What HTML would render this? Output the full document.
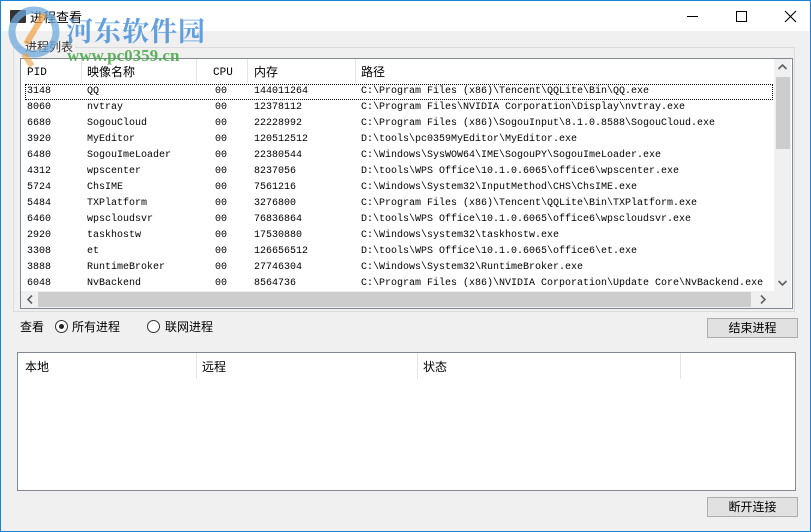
<!DOCTYPE html>
<html><head><meta charset="utf-8">
<style>
*{margin:0;padding:0;box-sizing:border-box}
body{width:811px;height:532px;position:relative;overflow:hidden;background:#f0f0f0;font-family:"Liberation Sans","Noto Sans CJK SC",sans-serif;font-size:12px;color:#000}
.abs{position:absolute}
#win{position:absolute;left:0;top:0;width:811px;height:532px;border:1px solid #1883d7;border-top:none}
#title{position:absolute;left:0;top:0;width:811px;height:31px;background:#fff;border-top:1px solid #1883d7}
.mono{font-family:"Liberation Mono","Noto Sans CJK SC",monospace;font-size:10px}
.row{position:absolute;left:0;height:16px;line-height:16px;white-space:pre}
.row span{position:absolute;top:0}
.hdr{position:absolute;top:2px;height:24px;line-height:24px;font-size:12px}
.hm{font-family:"Liberation Mono",monospace;font-size:11px}
.sep{position:absolute;top:0;width:1px;height:24px;background:#e5e5e5}
.btn{position:absolute;width:91px;height:20px;background:#e1e1e1;border:1px solid #adadad;text-align:center;line-height:18px;font-family:"Liberation Sans","Noto Sans CJK SC",sans-serif;font-size:12px}
</style></head><body>
<div id="title">
 <div class="abs" style="left:10px;top:9px;width:16px;height:13px;background:#333;border-radius:1px"></div>
 <div class="abs" style="left:30px;top:6px;font-size:13px">进程查看</div>
 <div class="abs" style="left:687px;top:15px;width:11px;height:1px;background:#000"></div>
 <div class="abs" style="left:736px;top:10px;width:11px;height:11px;border:1px solid #000"></div>
 <svg class="abs" style="left:784px;top:9px" width="13" height="13"><path d="M1 1L12 12M12 1L1 12" stroke="#000" stroke-width="1.1"/></svg>
</div>
<div id="win"></div>

<div class="abs" style="left:13px;top:47px;width:782px;height:265px;border:1px solid #dcdcdc"></div>
<div class="abs" style="left:23px;top:38px;background:#f0f0f0;padding:0 2px;font-size:12px;color:#333">进程列表</div>

<div class="abs mono" style="left:20px;top:58px;width:773px;height:251px;border:1px solid #828790;background:#fff;overflow:hidden">
 <div class="hdr hm" style="left:6px">PID</div>
 <div class="sep" style="left:60px"></div>
 <div class="hdr" style="left:66px">映像名称</div>
 <div class="sep" style="left:175px"></div>
 <div class="hdr hm" style="left:192px">CPU</div>
 <div class="sep" style="left:226px"></div>
 <div class="hdr" style="left:233px">内存</div>
 <div class="sep" style="left:334px"></div>
 <div class="hdr" style="left:340px">路径</div>
 <div class="abs" style="left:4px;top:25px;width:748px;height:16px;border:1px dotted #000"></div>
 <div class="abs" style="left:0;top:25px;width:753px">
  <div class="row" style="top:0"><span style="left:6px">3148</span><span style="left:66px">QQ</span><span style="left:194px">00</span><span style="left:233px">144011264</span><span style="left:340px">C:\Program Files (x86)\Tencent\QQLite\Bin\QQ.exe</span></div>
  <div class="row" style="top:16px"><span style="left:6px">8060</span><span style="left:66px">nvtray</span><span style="left:194px">00</span><span style="left:233px">12378112</span><span style="left:340px">C:\Program Files\NVIDIA Corporation\Display\nvtray.exe</span></div>
  <div class="row" style="top:32px"><span style="left:6px">6680</span><span style="left:66px">SogouCloud</span><span style="left:194px">00</span><span style="left:233px">22228992</span><span style="left:340px">C:\Program Files (x86)\SogouInput\8.1.0.8588\SogouCloud.exe</span></div>
  <div class="row" style="top:48px"><span style="left:6px">3920</span><span style="left:66px">MyEditor</span><span style="left:194px">00</span><span style="left:233px">120512512</span><span style="left:340px">D:\tools\pc0359MyEditor\MyEditor.exe</span></div>
  <div class="row" style="top:64px"><span style="left:6px">6480</span><span style="left:66px">SogouImeLoader</span><span style="left:194px">00</span><span style="left:233px">22380544</span><span style="left:340px">C:\Windows\SysWOW64\IME\SogouPY\SogouImeLoader.exe</span></div>
  <div class="row" style="top:80px"><span style="left:6px">4312</span><span style="left:66px">wpscenter</span><span style="left:194px">00</span><span style="left:233px">8237056</span><span style="left:340px">D:\tools\WPS Office\10.1.0.6065\office6\wpscenter.exe</span></div>
  <div class="row" style="top:96px"><span style="left:6px">5724</span><span style="left:66px">ChsIME</span><span style="left:194px">00</span><span style="left:233px">7561216</span><span style="left:340px">C:\Windows\System32\InputMethod\CHS\ChsIME.exe</span></div>
  <div class="row" style="top:112px"><span style="left:6px">5484</span><span style="left:66px">TXPlatform</span><span style="left:194px">00</span><span style="left:233px">3276800</span><span style="left:340px">C:\Program Files (x86)\Tencent\QQLite\Bin\TXPlatform.exe</span></div>
  <div class="row" style="top:128px"><span style="left:6px">6460</span><span style="left:66px">wpscloudsvr</span><span style="left:194px">00</span><span style="left:233px">76836864</span><span style="left:340px">D:\tools\WPS Office\10.1.0.6065\office6\wpscloudsvr.exe</span></div>
  <div class="row" style="top:144px"><span style="left:6px">2920</span><span style="left:66px">taskhostw</span><span style="left:194px">00</span><span style="left:233px">17530880</span><span style="left:340px">C:\Windows\system32\taskhostw.exe</span></div>
  <div class="row" style="top:160px"><span style="left:6px">3308</span><span style="left:66px">et</span><span style="left:194px">00</span><span style="left:233px">126656512</span><span style="left:340px">D:\tools\WPS Office\10.1.0.6065\office6\et.exe</span></div>
  <div class="row" style="top:176px"><span style="left:6px">3888</span><span style="left:66px">RuntimeBroker</span><span style="left:194px">00</span><span style="left:233px">27746304</span><span style="left:340px">C:\Windows\System32\RuntimeBroker.exe</span></div>
  <div class="row" style="top:192px"><span style="left:6px">6048</span><span style="left:66px">NvBackend</span><span style="left:194px">00</span><span style="left:233px">8564736</span><span style="left:340px">C:\Program Files (x86)\NVIDIA Corporation\Update Core\NvBackend.exe</span></div>
 </div>
 <div class="abs" style="left:753px;top:0;width:17px;height:232px;background:#f0f0f0"></div>
 <div class="abs" style="left:755px;top:18px;width:14px;height:72px;background:#cdcdcd"></div>
 <svg class="abs" style="left:756px;top:4px" width="11" height="8"><path d="M1.5 6L5.5 2L9.5 6" stroke="#606060" stroke-width="1.6" fill="none"/></svg>
 <svg class="abs" style="left:756px;top:220px" width="11" height="8"><path d="M1.5 2L5.5 6L9.5 2" stroke="#606060" stroke-width="1.6" fill="none"/></svg>
 <div class="abs" style="left:0;top:232px;width:753px;height:17px;background:#f0f0f0"></div>
 <div class="abs" style="left:17px;top:233px;width:713px;height:15px;background:#cdcdcd"></div>
 <div class="abs" style="left:753px;top:232px;width:17px;height:17px;background:#f0f0f0"></div>
 <svg class="abs" style="left:5px;top:235px" width="8" height="11"><path d="M6 1.5L2 5.5L6 9.5" stroke="#606060" stroke-width="1.6" fill="none"/></svg>
 <svg class="abs" style="left:738px;top:235px" width="8" height="11"><path d="M2 1.5L6 5.5L2 9.5" stroke="#606060" stroke-width="1.6" fill="none"/></svg>
</div>

<div class="abs" style="left:20px;top:318px">查看</div>
<div class="abs" style="left:55px;top:320px;width:13px;height:13px;border:1px solid #333;border-radius:50%;background:#fff"><div style="position:absolute;left:3px;top:3px;width:5px;height:5px;border-radius:50%;background:#222"></div></div>
<div class="abs" style="left:72px;top:318px">所有进程</div>
<div class="abs" style="left:147px;top:320px;width:13px;height:13px;border:1px solid #333;border-radius:50%;background:#fff"></div>
<div class="abs" style="left:165px;top:318px">联网进程</div>
<div class="btn" style="left:707px;top:318px">结束进程</div>

<div class="abs" style="left:17px;top:352px;width:779px;height:139px;border:1px solid #828790;background:#fff">
 <div class="hdr" style="left:7px;top:2px">本地</div>
 <div class="sep" style="left:178px;height:26px"></div>
 <div class="hdr" style="left:184px;top:2px">远程</div>
 <div class="sep" style="left:399px;height:26px"></div>
 <div class="hdr" style="left:405px;top:2px">状态</div>
 <div class="sep" style="left:662px;height:26px"></div>
</div>
<div class="btn" style="left:707px;top:497px">断开连接</div>

<svg class="abs" style="left:4px;top:4px" width="60" height="64">
 <circle cx="30" cy="28" r="22" fill="none" stroke="#6fa8dc" stroke-width="7" opacity="0.75"/>
 <path d="M22 40L40 10" stroke="#f0a040" stroke-width="6" opacity="0.7"/>
 <path d="M20 50L28 62" stroke="#f0a040" stroke-width="6" opacity="0.6"/>
</svg>
<div class="abs" style="left:66px;top:10px;font-family:'Noto Serif CJK SC','Noto Sans CJK SC',serif;font-weight:bold;font-size:27px;color:#4a90d9;opacity:0.85;letter-spacing:1px">河东软件园</div>
<div class="abs" style="left:67px;top:46px;font-family:'Liberation Serif',serif;font-weight:bold;font-size:17px;color:#45a845;opacity:0.85">www.pc0359.cn</div>
</body></html>
